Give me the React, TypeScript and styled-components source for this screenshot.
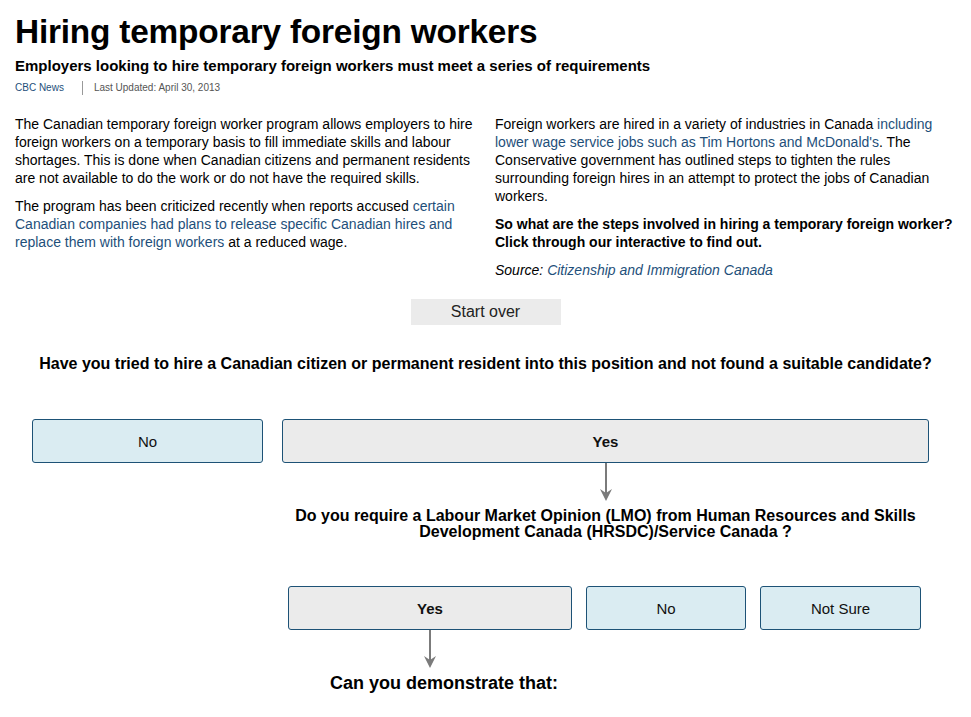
import styled, { createGlobalStyle } from "styled-components";

const GlobalStyle = createGlobalStyle`
  body {
    margin: 0;
    background: #ffffff;
    font-family: "Liberation Sans", Arial, sans-serif;
    color: #000;
  }
`;

type Choice = {
  label: string;
  selected?: boolean;
};

const firstChoices: Choice[] = [
  { label: "No" },
  { label: "Yes", selected: true },
];

const secondChoices: Choice[] = [
  { label: "Yes", selected: true },
  { label: "No" },
  { label: "Not Sure" },
];

const DownArrow = ({ height }: { height: number }) => (
  <ArrowWrap>
    <svg width="14" height={height} viewBox={`0 0 14 ${height}`}>
      <line x1="7" y1="0" x2="7" y2={height - 6} stroke="#7b7b7b" strokeWidth="2" />
      <path d={`M1 ${height - 12} L7 ${height} L13 ${height - 12} L7 ${height - 8} Z`} fill="#7b7b7b" />
    </svg>
  </ArrowWrap>
);

export default function App() {
  return (
    <>
      <GlobalStyle />
      <Page>
        <Title>Hiring temporary foreign workers</Title>
        <Subtitle>
          Employers looking to hire temporary foreign workers must meet a series of requirements
        </Subtitle>
        <Byline>
          <Source>CBC News</Source>
          <Updated>Last Updated: April 30, 2013</Updated>
        </Byline>

        <Columns>
          <Column>
            <Para>
              The Canadian temporary foreign worker program allows employers to hire
              foreign workers on a temporary basis to fill immediate skills and labour
              shortages. This is done when Canadian citizens and permanent residents
              are not available to do the work or do not have the required skills.
            </Para>
            <Para>
              The program has been criticized recently when reports accused{" "}
              <Link>
                certain Canadian companies had plans to release specific Canadian hires and
                replace them with foreign workers
              </Link>{" "}
              at a reduced wage.
            </Para>
          </Column>
          <Column>
            <Para>
              Foreign workers are hired in a variety of industries in Canada{" "}
              <Link>including lower wage service jobs such as Tim Hortons and McDonald's</Link>.
              The Conservative government has outlined steps to tighten the rules
              surrounding foreign hires in an attempt to protect the jobs of Canadian
              workers.
            </Para>
            <Para $bold>
              So what are the steps involved in hiring a temporary foreign worker?
              Click through our interactive to find out.
            </Para>
            <Para $italic>
              Source: <Link>Citizenship and Immigration Canada</Link>
            </Para>
          </Column>
        </Columns>

        <StartRow>
          <StartButton>Start over</StartButton>
        </StartRow>

        <Flow>
          <Question>
            Have you tried to hire a Canadian citizen or permanent resident into this
            position and not found a suitable candidate?
          </Question>

          <FirstRow>
            <ChoiceButton $selected={false}>{firstChoices[0].label}</ChoiceButton>
            <Branch>
              <ChoiceButton $selected>{firstChoices[1].label}</ChoiceButton>
              <DownArrow height={38} />
              <SubQuestion>
                Do you require a Labour Market Opinion (LMO) from Human Resources and
                Skills Development Canada (HRSDC)/Service Canada ?
              </SubQuestion>
              <SecondRow>
                <Branch>
                  <ChoiceButton $selected>{secondChoices[0].label}</ChoiceButton>
                  <DownArrow height={38} />
                  <SmallQuestion>Can you demonstrate that:</SmallQuestion>
                </Branch>
                {secondChoices.slice(1).map((c) => (
                  <ChoiceButton key={c.label} $selected={!!c.selected}>
                    {c.label}
                  </ChoiceButton>
                ))}
              </SecondRow>
            </Branch>
          </FirstRow>
        </Flow>
      </Page>
    </>
  );
}

const Page = styled.div`
  padding: 12px 15px 20px;
`;

const Title = styled.h1`
  margin: 0;
  font-size: 33.4px;
  line-height: 40px;
  font-weight: 700;
  letter-spacing: -0.2px;
`;

const Subtitle = styled.h2`
  margin: 4px 0 0;
  font-size: 15px;
  line-height: 20px;
  font-weight: 700;
`;

const Byline = styled.div`
  display: flex;
  align-items: center;
  margin-top: 5px;
  font-size: 10px;
  line-height: 14px;
`;

const Source = styled.span`
  color: #1e4f7a;
  padding-right: 18px;
  border-right: 1px solid #999;
`;

const Updated = styled.span`
  color: #555;
  padding-left: 11px;
`;

const Columns = styled.div`
  display: grid;
  grid-template-columns: 460px 460px;
  column-gap: 20px;
  margin-top: 20px;
`;

const Column = styled.div`
  font-size: 14px;
  line-height: 18px;
`;

const Para = styled.p<{ $bold?: boolean; $italic?: boolean }>`
  margin: 0 0 10px;
  font-weight: ${(p) => (p.$bold ? 700 : 400)};
  font-style: ${(p) => (p.$italic ? "italic" : "normal")};
`;

const Link = styled.span`
  color: #1e4f7a;
`;

const StartRow = styled.div`
  display: flex;
  justify-content: center;
  margin-top: 10px;
`;

const StartButton = styled.div`
  width: 150px;
  height: 26px;
  line-height: 26px;
  text-align: center;
  background: #ebebeb;
  color: #222;
  font-size: 16px;
`;

const Flow = styled.div`
  padding: 0 27px 0 17px;
  font-family: "Liberation Sans Narrow", "Arial Narrow", "Liberation Sans", sans-serif;
`;

const Question = styled.div`
  margin: 29px -10px 0;
  padding-left: 10px;
  text-align: center;
  font-weight: 700;
  font-size: 16px;
  line-height: 20px;
`;

const FirstRow = styled.div`
  display: grid;
  grid-template-columns: 231px 1fr;
  column-gap: 19px;
  align-items: start;
  margin-top: 45px;
`;

const Branch = styled.div`
  display: flex;
  flex-direction: column;
  align-items: stretch;
`;

const ChoiceButton = styled.div<{ $selected: boolean }>`
  box-sizing: border-box;
  height: 44px;
  display: flex;
  align-items: center;
  justify-content: center;
  border: 1px solid #1d5276;
  border-radius: 3px;
  background: ${(p) => (p.$selected ? "#ebebeb" : "#daecf2")};
  font-weight: ${(p) => (p.$selected ? 700 : 400)};
  font-size: 15px;
  color: #111;
`;

const ArrowWrap = styled.div`
  display: flex;
  justify-content: center;
  height: 38px;
`;

const SubQuestion = styled.div`
  margin: 7px auto 0;
  max-width: 630px;
  text-align: center;
  font-weight: 700;
  font-size: 16px;
  line-height: 16px;
`;

const SecondRow = styled.div`
  display: grid;
  grid-template-columns: 284px 160px 161px;
  column-gap: 14px;
  align-items: start;
  margin-top: 46px;
  padding-left: 6px;
`;

const SmallQuestion = styled.div`
  margin-top: 5px;
  padding-left: 42px;
  font-weight: 700;
  font-size: 18px;
  line-height: 20px;
`;
